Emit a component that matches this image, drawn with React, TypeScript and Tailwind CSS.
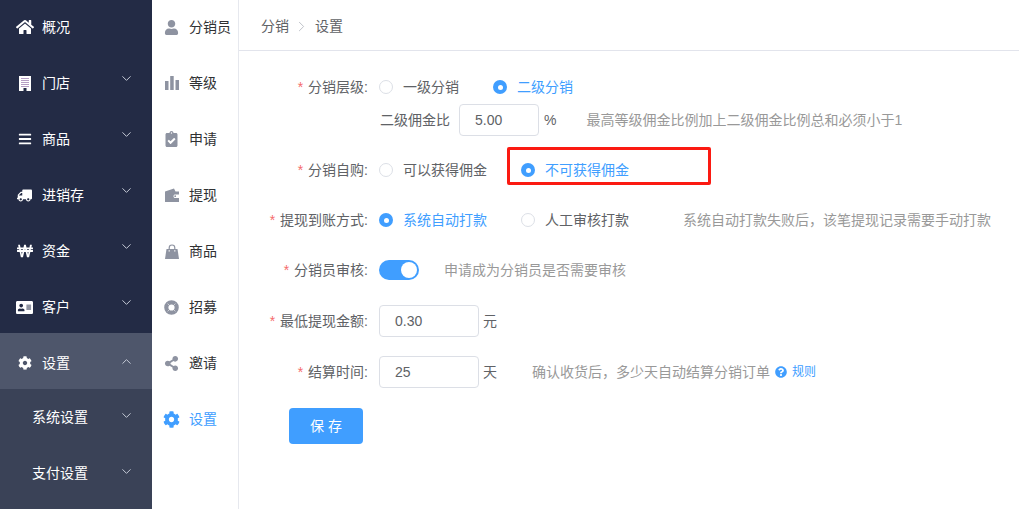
import React from 'react';
import { ChevronDown, ChevronUp, ChevronRight } from 'lucide-react';
import {
  FaHome,
  FaBars,
  FaTruck,
  FaWonSign,
  FaAddressCard,
  FaCog,
  FaUser,
  FaClipboardCheck,
  FaShareAlt,
  FaQuestionCircle,
} from 'react-icons/fa';

const FONT = 'font-["Liberation_Sans","Noto_Sans_CJK_SC",sans-serif]';

const BarsIcon = () => (
  <svg width="14" height="14" viewBox="0 0 14 14" fill="currentColor">
    <rect x="0" y="5" width="3.5" height="9" />
    <rect x="5.2" y="0" width="3.5" height="14" />
    <rect x="10.5" y="4" width="3.5" height="10" />
  </svg>
);

// the store building: white block with a grid of windows and a door
const BuildingIcon = () => (
  <svg width="12" height="15" viewBox="0 0 12 15">
    <rect width="12" height="15" fill="#fff" />
    {[2, 4, 6, 8, 10].map((y) =>
      [2.5, 4.5, 6.5, 8.5].map((x) => <rect key={`${x}-${y}`} x={x} y={y} width="1" height="1" fill="#6b3a86" />),
    )}
    <rect x="4.5" y="12" width="3" height="3" fill="#232b45" />
  </svg>
);

const WalletIcon = () => (
  <svg width="14" height="14" viewBox="0 0 14 14" fill="currentColor">
    <path d="M0 3.5 9 0.5 10.5 3.5H14V6.5H9.5A2 2 0 0 0 9.5 10H14V14H0Z" />
    <circle cx="10.2" cy="8.2" r="0.9" />
  </svg>
);

const BagIcon = () => (
  <svg width="14" height="15" viewBox="0 0 14 15" fill="none">
    <path d="M1.5 5H12.5L14 15H0Z" fill="currentColor" />
    <path d="M4.2 7V3.8A2.8 2.8 0 0 1 9.8 3.8V7" stroke="currentColor" strokeWidth="1.2" />
    <path d="M4.2 6.2V7.6M9.8 6.2V7.6" stroke="#fff" strokeWidth="1.2" />
  </svg>
);

const RingIcon = () => (
  <svg width="15" height="15" viewBox="0 0 15 15" fill="none">
    <circle cx="7.5" cy="7.5" r="5.2" stroke="currentColor" strokeWidth="4.2" />
    <path d="M3.6 3.6 5.2 5.2M11.4 3.6 9.8 5.2M3.6 11.4 5.2 9.8M11.4 11.4 9.8 9.8" stroke="#fff" strokeOpacity="0.7" strokeWidth="0.8" />
  </svg>
);

const mainMenu = [
  { label: '概况', icon: <FaHome size={18} />, arrow: false },
  { label: '门店', icon: <BuildingIcon />, arrow: true },
  { label: '商品', icon: <FaBars size={14} />, arrow: true },
  { label: '进销存', icon: <FaTruck size={15} className="-scale-x-100" />, arrow: true },
  { label: '资金', icon: <FaWonSign size={16} />, arrow: true },
  { label: '客户', icon: <FaAddressCard size={17} />, arrow: true },
];

const subMenu = [
  { label: '分销员', icon: <FaUser size={15} /> },
  { label: '等级', icon: <BarsIcon /> },
  { label: '申请', icon: <FaClipboardCheck size={16} /> },
  { label: '提现', icon: <WalletIcon /> },
  { label: '商品', icon: <BagIcon /> },
  { label: '招募', icon: <RingIcon /> },
  { label: '邀请', icon: <FaShareAlt size={15} /> },
];

const Arrow = ({ up, lift }: { up?: boolean; lift: string }) => (
  <span className={`ml-auto mr-[18px] text-[#c5cad6] ${lift}`}>
    {up ? <ChevronUp size={15} strokeWidth={1.6} /> : <ChevronDown size={15} strokeWidth={1.6} />}
  </span>
);

const Radio = ({ label, checked, outline }: { label: string; checked?: boolean; outline?: boolean }) => (
  <span className="relative flex items-center">
    {outline && (
      <span className="absolute -left-[14px] -top-[13px] h-[38px] w-[204px] rounded-[2px] border-[3px] border-[#fb1a12]" />
    )}
    <span
      className={
        checked
          ? 'flex h-[14px] w-[14px] items-center justify-center rounded-full bg-[#409eff]'
          : 'h-[14px] w-[14px] rounded-full border border-[#dcdfe6] bg-white'
      }
    >
      {checked && <span className="h-[5px] w-[5px] rounded-full bg-white" />}
    </span>
    <span className={`ml-[10px] ${checked ? 'text-[#409eff]' : 'text-[#606266]'}`}>{label}</span>
  </span>
);

const Row = ({ label, className, children }: { label: string; className: string; children: React.ReactNode }) => (
  <div className={`flex h-[32px] items-center ${className}`}>
    <div className="w-[129px] shrink-0 text-right text-[#606266]">
      <span className="mr-[5px] text-[#f56c6c]">*</span>
      {label}:
    </div>
    <div className="ml-[11px] flex items-center">{children}</div>
  </div>
);

const Field = ({ value, width }: { value: string; width: string }) => (
  <div className={`flex h-[32px] items-center rounded-[4px] border border-[#dcdfe6] bg-white pl-[15px] text-[#606266] ${width}`}>
    {value}
  </div>
);

export default function App() {
  return (
    <div className={`flex h-[509px] w-[1019px] overflow-hidden bg-white text-[14px] ${FONT}`}>
      {/* main nav */}
      <aside className="-mt-[3px] flex w-[152px] shrink-0 flex-col bg-[#232b45] text-white">
        {mainMenu.map((m) => (
          <div key={m.label} className="flex h-[56px] shrink-0 items-center pt-[4px]">
            <span className="ml-[12px] mr-[5px] flex w-[25px] justify-center">{m.icon}</span>
            <span>{m.label}</span>
            {m.arrow && <Arrow lift="mb-[9px]" />}
          </div>
        ))}
        <div className="flex h-[56px] shrink-0 items-center bg-[#4e566b] pt-[4px]">
          <span className="ml-[12px] mr-[5px] flex w-[25px] justify-center">
            <FaCog size={14} />
          </span>
          <span>设置</span>
          <Arrow up lift="mb-[4px]" />
        </div>
        <div className="flex-1 bg-[#3a4257]">
          {['系统设置', '支付设置'].map((s) => (
            <div key={s} className="flex h-[56px] items-center pl-[32px]">
              <span>{s}</span>
              <Arrow lift="mb-[4px]" />
            </div>
          ))}
        </div>
      </aside>

      {/* secondary nav */}
      <aside className="-mt-[1px] flex w-[87px] shrink-0 flex-col border-r border-[#e6e8ee] text-[#303133]">
        {subMenu.map((m) => (
          <div key={m.label} className="flex h-[56px] shrink-0 items-center">
            <span className="ml-[12px] flex w-[15px] justify-center text-[#8e93a1]">{m.icon}</span>
            <span className="ml-[10px]">{m.label}</span>
          </div>
        ))}
        <div className="flex h-[56px] shrink-0 items-center text-[#409eff]">
          <span className="ml-[11px] flex w-[17px] justify-center">
            <FaCog size={17} />
          </span>
          <span className="ml-[9px]">设置</span>
        </div>
      </aside>

      <main className="flex-1">
        <div className="flex h-[51px] items-center border-b border-[#e2e4ec] pt-[3px] pl-[22px] text-[#606266]">
          <span>分销</span>
          <ChevronRight size={17} strokeWidth={1.2} className="ml-[4px] mr-[5px] text-[#b4b7bf]" />
          <span>设置</span>
        </div>

        <div className="pt-[20px]">
          <Row label="分销层级" className="">
            <div className="flex gap-[34px]">
              <Radio label="一级分销" />
              <Radio label="二级分销" checked />
            </div>
          </Row>
          <div className="ml-[141px] mt-[1px] flex h-[32px] items-center text-[#606266]">
            <span className="w-[79px]">二级佣金比</span>
            <Field value="5.00" width="w-[80px]" />
            <span className="ml-[5px]">%</span>
            <span className="ml-[30px] text-[#999]">最高等级佣金比例加上二级佣金比例总和必须小于1</span>
          </div>

          <Row label="分销自购" className="mt-[18px]">
            <div className="flex gap-[34px]">
              <Radio label="可以获得佣金" />
              <Radio label="不可获得佣金" checked outline />
            </div>
          </Row>

          <Row label="提现到账方式" className="mt-[18px]">
            <div className="flex gap-[34px]">
              <Radio label="系统自动打款" checked />
              <Radio label="人工审核打款" />
            </div>
            <span className="ml-[54px] whitespace-nowrap text-[#999]">系统自动打款失败后，该笔提现记录需要手动打款</span>
          </Row>

          <Row label="分销员审核" className="mt-[18px]">
            <span className="flex h-[20px] w-[40px] items-center justify-end rounded-full bg-[#409eff] pr-[2px]">
              <span className="h-[16px] w-[16px] rounded-full bg-white" />
            </span>
            <span className="ml-[25px] text-[#999]">申请成为分销员是否需要审核</span>
          </Row>

          <Row label="最低提现金额" className="mt-[19px]">
            <Field value="0.30" width="w-[100px]" />
            <span className="ml-[4px] text-[#606266]">元</span>
          </Row>

          <Row label="结算时间" className="mt-[19px]">
            <Field value="25" width="w-[100px]" />
            <span className="ml-[4px] text-[#606266]">天</span>
            <span className="ml-[35px] text-[#999]">确认收货后，多少天自动结算分销订单</span>
            <FaQuestionCircle size={12} className="ml-[5px] text-[#409eff]" />
            <span className="ml-[5px] text-[12px] text-[#409eff]">规则</span>
          </Row>

          <button className="ml-[50px] mt-[20px] h-[36px] w-[74px] rounded-[4px] bg-[#409eff] pl-[4px] tracking-[4px] text-white">
            保存
          </button>
        </div>
      </main>
    </div>
  );
}
